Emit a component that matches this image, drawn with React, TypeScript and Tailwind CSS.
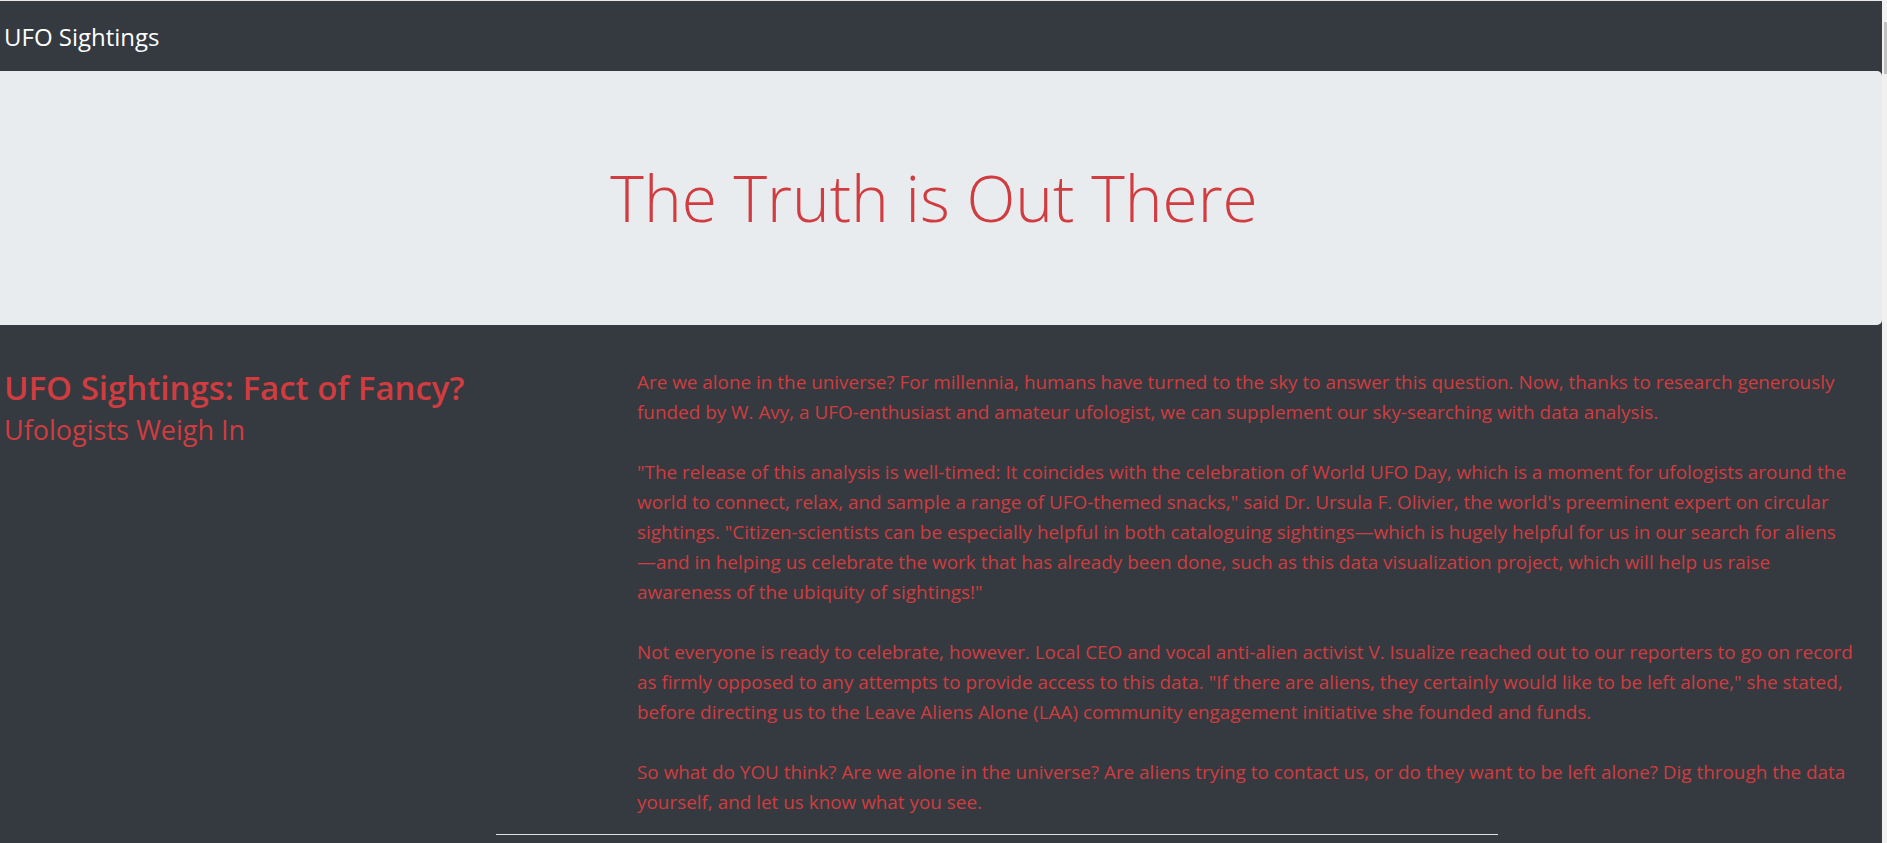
const paragraphs: string[][] = [
  [
    "Are we alone in the universe? For millennia, humans have turned to the sky to answer this question. Now, thanks to research generously",
    "funded by W. Avy, a UFO-enthusiast and amateur ufologist, we can supplement our sky-searching with data analysis.",
  ],
  [
    "\"The release of this analysis is well-timed: It coincides with the celebration of World UFO Day, which is a moment for ufologists around the",
    "world to connect, relax, and sample a range of UFO-themed snacks,\" said Dr. Ursula F. Olivier, the world's preeminent expert on circular",
    "sightings. \"Citizen-scientists can be especially helpful in both cataloguing sightings\u2014which is hugely helpful for us in our search for aliens",
    "\u2014and in helping us celebrate the work that has already been done, such as this data visualization project, which will help us raise",
    "awareness of the ubiquity of sightings!\"",
  ],
  [
    "Not everyone is ready to celebrate, however. Local CEO and vocal anti-alien activist V. Isualize reached out to our reporters to go on record",
    "as firmly opposed to any attempts to provide access to this data. \"If there are aliens, they certainly would like to be left alone,\" she stated,",
    "before directing us to the Leave Aliens Alone (LAA) community engagement initiative she founded and funds.",
  ],
  [
    "So what do YOU think? Are we alone in the universe? Are aliens trying to contact us, or do they want to be left alone? Dig through the data",
    "yourself, and let us know what you see.",
  ],
]

const font = { fontFamily: '"Open Sans", "Noto Sans", sans-serif' }

export default function App() {
  return (
    <div className="flex h-[843px] overflow-hidden bg-[#343a40]" style={font}>
      <div className="flex min-w-0 flex-1 flex-col border-t border-[#e8e8e8]">
        {/* navbar */}
        <nav className="flex h-[70px] items-center bg-[#343a40] pl-[4px]">
          <span className="pt-[2px] text-[24px] leading-none text-white">UFO Sightings</span>
        </nav>

        {/* jumbotron */}
        <div className="flex h-[254px] items-center justify-center rounded-r-[5px] bg-[#e9ecef]">
          <h1 className="-ml-[14px] text-[64px] font-light leading-none text-[#d03c3f]">The Truth is Out There</h1>
        </div>

        {/* article */}
        <div className="flex pt-[41px]">
          <div className="w-[637px] shrink-0 pl-[4px]">
            <h2 className="text-[33px] font-semibold leading-[44px] text-[#d03c3f]">UFO Sightings: Fact of Fancy?</h2>
            <h3 className="mt-[2px] text-[27px] leading-[36px] text-[#d03c3f]">Ufologists Weigh In</h3>
          </div>
          <div className="flex min-w-0 flex-1 flex-col gap-[30px] pt-px text-[18.9px] leading-[30px] text-[#d03c3f]">
            {paragraphs.map((lines, i) => (
              <p key={i}>
                {lines.map((line, j) => (
                  <span key={j} className="block whitespace-nowrap">
                    {line}
                  </span>
                ))}
              </p>
            ))}
          </div>
        </div>

        <div className="mt-[17px] ml-[496px] h-px w-[1002px] bg-[#dee2e6]" />
      </div>

      {/* scrollbar strip */}
      <div className="w-[5px] shrink-0 bg-[#f1f1f1]">
        <div className="ml-[2px] mt-[22px] h-[52px] w-[3px] bg-[#c1c1c1]" />
      </div>
    </div>
  )
}
